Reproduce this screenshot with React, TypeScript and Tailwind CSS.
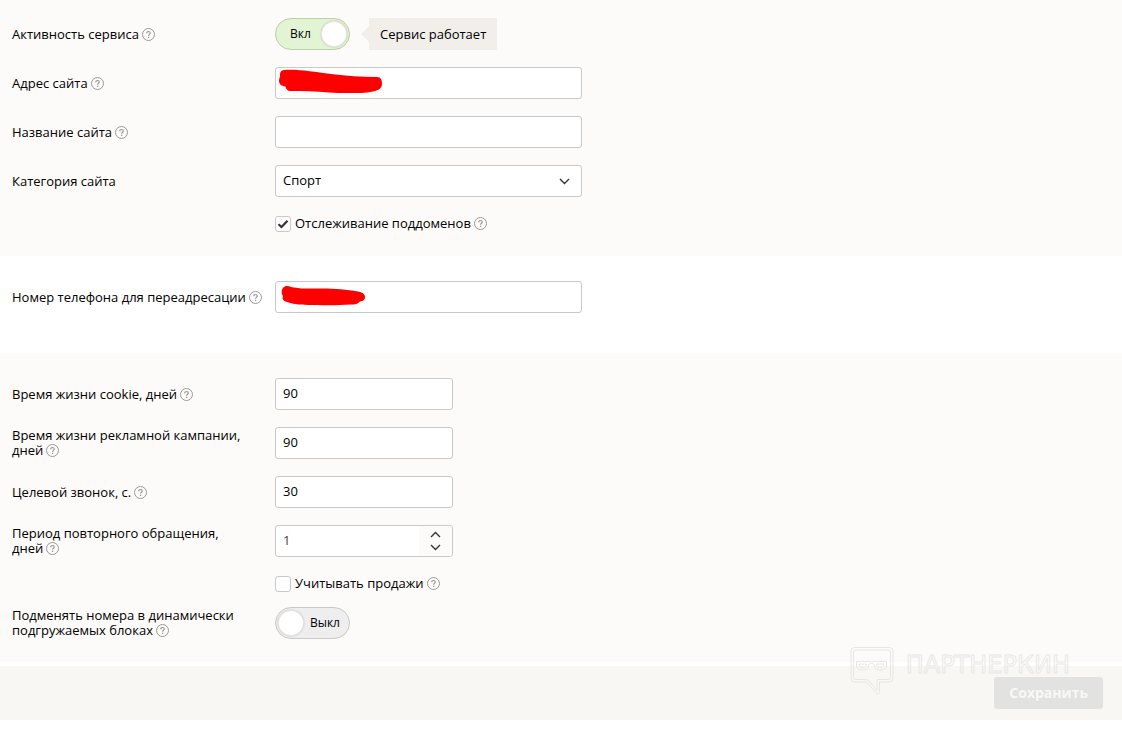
import { useState } from "react";
import type { ReactNode } from "react";

const inputClass =
  "block h-8 w-full rounded-[3px] border border-[#c9c9c9] bg-white px-[7px] pb-0.5 text-[13px] text-black outline-none focus:border-[#999]";

function Help() {
  return (
    <svg
      className="ml-[3px] inline-block size-[13px] align-[-2px]"
      viewBox="0 0 13 13"
      fill="none"
      stroke="#999"
      aria-hidden="true"
    >
      <circle cx="6.5" cy="6.5" r="6" />
      <path d="M4.7 5.2c0-1 .8-1.7 1.8-1.7s1.8.7 1.8 1.6c0 1.2-1.7 1.3-1.7 2.6" strokeWidth="1.2" />
      <path d="M6.6 8.7v1.3" strokeWidth="1.3" />
    </svg>
  );
}

type RowProps = { id: string; label: string; help?: boolean; children: ReactNode };

function Row({ id, label, help = true, children }: RowProps) {
  return (
    <div className="grid grid-cols-[251px_1fr] items-center gap-3">
      <label htmlFor={id} className="whitespace-pre-line">
        {label}
        {help && <Help />}
      </label>
      <div className="flex">{children}</div>
    </div>
  );
}

function Toggle({ id, initial }: { id: string; initial: boolean }) {
  const [on, setOn] = useState(initial);
  return (
    <label
      className={
        on
          ? "flex h-8 w-[75px] cursor-pointer items-center justify-between rounded-full border border-[#bccfa5] bg-[#e2f4d3] pr-0.5 pl-3.5 text-xs"
          : "flex h-8 w-[75px] cursor-pointer flex-row-reverse items-center justify-between rounded-full border border-[#c9c9c9] bg-[#eeeeee] pr-[9px] pl-0.5 text-xs"
      }
    >
      <input
        id={id}
        type="checkbox"
        role="switch"
        className="sr-only"
        checked={on}
        onChange={(e) => setOn(e.target.checked)}
      />
      <span>{on ? "Вкл" : "Выкл"}</span>
      <span className="size-[26px] rounded-full border border-black/10 bg-white shadow-[0_0_2px_rgba(0,0,0,0.2)]" />
    </label>
  );
}

function CheckRow({ id, label, checked }: { id: string; label: string; checked?: boolean }) {
  return (
    <div className="flex items-center gap-1 pl-[263px]">
      <span className="relative size-4">
        <input
          id={id}
          type="checkbox"
          defaultChecked={checked}
          className="peer block size-4 appearance-none rounded-[3px] border border-[#c9c9c9] bg-white"
        />
        <svg
          className="pointer-events-none absolute inset-0 hidden size-4 peer-checked:block"
          viewBox="0 0 16 16"
          fill="none"
          stroke="#333"
          strokeWidth="2.2"
        >
          <path d="M3.5 8.2 6.5 11 12.5 4.8" />
        </svg>
      </span>
      <label htmlFor={id} className="pb-px">
        {label}
        <Help />
      </label>
    </div>
  );
}

function Watermark() {
  return (
    <div className="pointer-events-none absolute -top-[19px] right-[52px] flex items-start gap-3" aria-hidden="true">
      <svg className="h-12 w-11" viewBox="0 0 44 48" fill="none" stroke="#e8e6e4">
        <path d="M4.5 .5h35A3.500 3.500 0 0 1 43 4v27.500a3.500 3.500 0 0 1-3.500 3.500H29.500v10.500c0 1.800-1.800 2-3 .8L19 37.500c-1.800-1.800-3-2.500-5-2.500H4.500A3.500 3.500 0 0 1 1 31.500V4A3.500 3.500 0 0 1 4.500.5Z" />
        <path d="M5.500 3h33a2 2 0 0 1 2 2v25.500a2 2 0 0 1-2 2H27v11L20 35c-1.700-1.700-3.300-2.500-5.500-2.500h-9a2 2 0 0 1-2-2V5a2 2 0 0 1 2-2Z" />
        <path d="M6.500 14.500h30v4a5 5 0 0 1-5 4.500h-2a5 5 0 0 1-5-4.500c0-1.500-.8-2-3-2s-3 .5-3 2a5 5 0 0 1-5 4.500h-2a5 5 0 0 1-5-4.500Z" />
        <path d="M9 17h7.500c0 2-1.200 3.500-3 3.500H12c-1.800 0-3-1.500-3-3.500ZM26.500 17H34c0 2-1.200 3.500-3 3.500h-1.500c-1.800 0-3-1.500-3-3.500Z" />
      </svg>
      <span className="pt-1.5 font-['DejaVu_Sans'] text-[24px] leading-[24px] text-transparent [-webkit-text-stroke:1px_#eae8e6]">
        ПАРТНЕРКИН
      </span>
    </div>
  );
}

export default function App() {
  const [period, setPeriod] = useState(1);

  return (
    <div className="min-h-screen bg-white font-['Open_Sans','Noto_Sans',sans-serif] text-[13px] leading-[15px] text-black">
      <form onSubmit={(e) => e.preventDefault()}>
        <section className="flex flex-col gap-[17px] bg-[#fcfbf9] px-3 pt-[18px] pb-6">
          <Row id="active" label="Активность сервиса">
            <Toggle id="active" initial={true} />
            <div className="ml-[11px] flex items-center">
              <svg className="h-4 w-2" viewBox="0 0 8 16" fill="#f2efea" aria-hidden="true">
                <path d="M8 0v16L0 8Z" />
              </svg>
              <span className="flex h-8 items-center bg-[#f2efea] px-[11px]">Сервис работает</span>
            </div>
          </Row>
          <Row id="url" label="Адрес сайта">
            <div className="relative w-[307px]">
              <input id="url" type="text" className={inputClass} />
              <svg className="absolute top-0.5 left-1 h-6 w-[104px]" viewBox="0 0 104 24" fill="#f00" aria-hidden="true">
                <path d="M5 1C20 0 34 3 52 5c16 2 30 3 46 3 4 0 5 3 5 6.500 0 5-3 6.500-9 8-12 2.500-28 2-44 1C36 22 24 22 12 22c-3 .5-5-1.500-5.500-4.500C2 17 0 15 0 11.500c0-2 1-3 1-5C1 3 2 1.500 5 1Z" />
              </svg>
            </div>
          </Row>
          <Row id="name" label="Название сайта">
            <div className="w-[307px]">
              <input id="name" type="text" className={inputClass} />
            </div>
          </Row>
          <Row id="category" label="Категория сайта" help={false}>
            <div className="relative w-[307px]">
              <select id="category" className={`${inputClass} appearance-none`}>
                <option>Спорт</option>
              </select>
              <svg
                className="pointer-events-none absolute top-[13px] right-3 h-[7px] w-[11px]"
                viewBox="0 0 11 7"
                fill="none"
                stroke="#333"
                strokeWidth="1.4"
              >
                <path d="M1 1 5.500 5.500 10 1" />
              </svg>
            </div>
          </Row>
          <div className="pt-0.5">
            <CheckRow id="subdomains" label="Отслеживание поддоменов" checked />
          </div>
        </section>

        <section className="px-3 pt-[25px] pb-10">
          <Row id="phone" label="Номер телефона для переадресации">
            <div className="relative w-[307px]">
              <input id="phone" type="tel" className={inputClass} />
              <svg className="absolute top-1 left-1.5 h-[21px] w-[84px]" viewBox="0 0 84 21" fill="#f00" aria-hidden="true">
                <path d="M5 1c3-.5 5 1 8 1.500 8 1.500 18 1 28 1 14 0 24 1 36 3 4 .5 7 2.500 7 5.500s-2 4-5 4.500c-2 2.500-5 3-9 3-10 .5-20 1-34 .5C24 20 14 20 6 17c-4-1-5-3-4-6C0 9 0 2 5 1Z" />
              </svg>
            </div>
          </Row>
        </section>

        <section className="flex flex-col gap-[17px] bg-[#fcfbf9] px-3 pt-[25px] pb-[23px]">
          <Row id="cookie" label="Время жизни cookie, дней">
            <div className="w-[178px]">
              <input id="cookie" type="text" defaultValue="90" className={inputClass} />
            </div>
          </Row>
          <Row id="campaign" label={"Время жизни рекламной кампании,\nдней"}>
            <div className="w-[178px]">
              <input id="campaign" type="text" defaultValue="90" className={inputClass} />
            </div>
          </Row>
          <Row id="call" label="Целевой звонок, с.">
            <div className="w-[178px]">
              <input id="call" type="text" defaultValue="30" className={inputClass} />
            </div>
          </Row>
          <Row id="period" label={"Период повторного обращения,\nдней"}>
            <div className="flex h-8 w-[178px] overflow-hidden rounded-[3px] border border-[#c9c9c9] bg-white">
              <input
                id="period"
                type="text"
                inputMode="numeric"
                value={period}
                onChange={(e) => setPeriod(Number(e.target.value) || 0)}
                className="min-w-0 flex-1 px-[7px] pb-0.5 text-[#444] outline-none"
              />
              <div className="flex w-[33px] flex-col bg-[#fcfbf9]">
                <button
                  type="button"
                  aria-label="Больше"
                  className="flex flex-1 items-center justify-center pt-0.5"
                  onClick={() => setPeriod(period + 1)}
                >
                  <svg className="h-[7px] w-[11px]" viewBox="0 0 11 7" fill="none" stroke="#333" strokeWidth="1.4">
                    <path d="M1 6 5.500 1.500 10 6" />
                  </svg>
                </button>
                <button
                  type="button"
                  aria-label="Меньше"
                  className="flex flex-1 items-center justify-center pb-0.5"
                  onClick={() => setPeriod(Math.max(0, period - 1))}
                >
                  <svg className="h-[7px] w-[11px]" viewBox="0 0 11 7" fill="none" stroke="#333" strokeWidth="1.4">
                    <path d="M1 1 5.500 5.500 10 1" />
                  </svg>
                </button>
              </div>
            </div>
          </Row>
          <div className="flex flex-col gap-[15px] pt-0.5">
            <CheckRow id="sales" label="Учитывать продажи" />
            <Row id="dynamic" label="Подменять номера в динамически подгружаемых блоках">
              <Toggle id="dynamic" initial={false} />
            </Row>
          </div>
        </section>

        <footer className="relative mt-1 flex justify-end bg-[#f8f7f3] py-[11px] pr-[19px]">
          <Watermark />
          <button
            type="submit"
            disabled
            className="h-8 rounded-[3px] bg-[#e2e2e0] px-[15px] text-sm font-bold text-[#f8f8f6]"
          >
            Сохранить
          </button>
        </footer>
      </form>
    </div>
  );
}
